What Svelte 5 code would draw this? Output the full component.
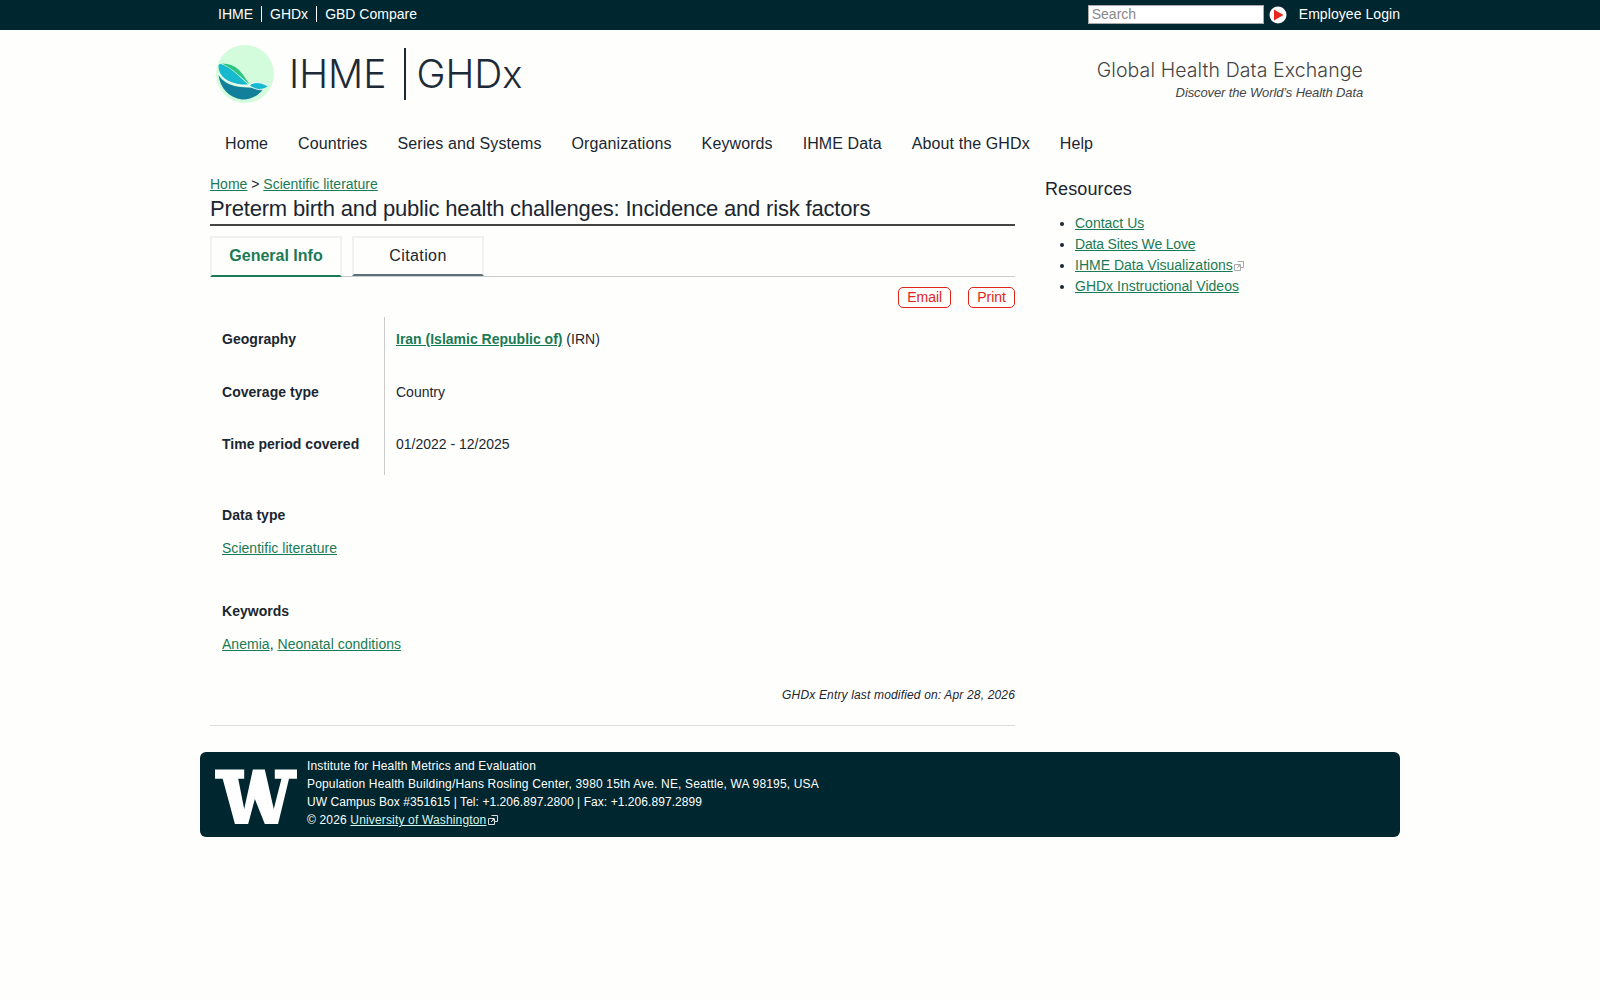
<script>
  const topLinks = ['IHME', 'GHDx', 'GBD Compare'];
  const nav = ['Home', 'Countries', 'Series and Systems', 'Organizations', 'Keywords', 'IHME Data', 'About the GHDx', 'Help'];
  const rows = [
    { k: 'Coverage type', v: 'Country' },
    { k: 'Time period covered', v: '01/2022 - 12/2025' }
  ];
</script>

{#snippet ext()}
  <svg class="ext" viewBox="0 0 10 10" width="10" height="10" aria-hidden="true">
    <path d="M3.5 .5h6v6h-2.5M.5 3.5h6v6h-6zM3 7l3-3M4 4h2v2" fill="none" stroke="currentColor" stroke-width="1" />
  </svg>
{/snippet}

<div class="topbar">
  <div class="wrap topin">
    <ul class="toplinks">
      {#each topLinks as t}<li>{t}</li>{/each}
    </ul>
    <div class="topright">
      <input class="search" placeholder="Search" />
      <svg class="go" viewBox="0 0 18 18" width="18" height="18" aria-hidden="true">
        <circle cx="9" cy="9" r="8.5" fill="#fff" />
        <path d="M5 3.5 L14.5 9 L5 14.5z" fill="#e8281c" />
      </svg>
      <span class="login">Employee Login</span>
    </div>
  </div>
</div>

<header class="wrap brand">
  <div class="logo">
    <svg viewBox="0 0 60 60" width="60" height="60" aria-hidden="true">
      <circle cx="30" cy="30" r="29" fill="#d3fcdc" />
      <path d="M3.500 31 C10 41 20 43 33 43.500 C42 44 48 45.500 48 45.500 C43 52 35 56 27 55.500 C14 54 5 44 3.500 31z" fill="#12809b" />
      <path d="M3.500 22 C4 20 5 20 6 20 C15 23 24 32 33 40.500 C24 41 14 39 8 33 C5 30 3.500 26 3.500 22z" fill="#17b9cf" />
      <path d="M7 19.500 C14 20 19 21 24 26 C28 30 31 35 34.500 40.500 C26 33 18 25 7 19.500z" fill="#2ec483" />
      <path d="M35 41 C39 38 43 38 47 39 L53 42 C49 45 46 45 40 45 C37 45 36 43 35 41z" fill="#17b9cf" />
      <path d="M3 29 C10 38 22 42 33 42 M33 41 C38 44 43 46.500 48 45.500 M33 42 C37 38 44 37 53 42" fill="none" stroke="#fff" stroke-width=".9" />
    </svg>
    <span class="mark first">IHME</span>
    <span class="rule"></span>
    <span class="mark">GHD<span class="x">x</span></span>
  </div>
  <div class="tagline">
    <div class="gh">Global Health Data Exchange</div>
    <div class="disc">Discover the World’s Health Data</div>
  </div>
</header>

<nav class="wrap mainnav">
  {#each nav as n}<span>{n}</span>{/each}
</nav>

<div class="wrap columns">
  <main>
    <div class="crumbs"><a href="#a">Home</a> &gt; <a href="#a">Scientific literature</a></div>
    <h1>Preterm birth and public health challenges: Incidence and risk factors</h1>
    <div class="tabs">
      <div class="tab active">General Info</div>
      <div class="tab cit">Citation</div>
    </div>
    <div class="actions">
      <span class="btn">Email</span>
      <span class="btn">Print</span>
    </div>
    <div class="facts">
      <div class="fact">
        <div class="k">Geography</div>
        <div class="v"><a href="#a" class="strong">Iran (Islamic Republic of)</a> (IRN)</div>
      </div>
      {#each rows as r}
        <div class="fact">
          <div class="k">{r.k}</div>
          <div class="v">{r.v}</div>
        </div>
      {/each}
    </div>
    <section class="block first">
      <div class="k">Data type</div>
      <p><a href="#a">Scientific literature</a></p>
    </section>
    <section class="block">
      <div class="k">Keywords</div>
      <p><a href="#a">Anemia</a>, <a href="#a">Neonatal conditions</a></p>
    </section>
    <div class="modified">GHDx Entry last modified on: Apr 28, 2026</div>
  </main>
  <aside>
    <h2>Resources</h2>
    <ul>
      <li><a href="#a">Contact Us</a></li>
      <li><a href="#a" class="tight">Data Sites We Love</a></li>
      <li><a href="#a">IHME Data Visualizations</a><span class="grey">{@render ext()}</span></li>
      <li><a href="#a">GHDx Instructional Videos</a></li>
    </ul>
  </aside>
</div>

<footer class="wrap foot">
  <svg class="w" viewBox="0 0 82.300 55" width="82" height="55" aria-hidden="true">
    <path d="M0 .3H29.300V9.700H23.300L29.300 40L38 .3H50L59 40L66.700 9.700H60V.3H82.300V9.700H74.300L63.300 55H50L40 30L33.300 55H20L7.700 9.700H0z" fill="#fff" />
  </svg>
  <div class="addr">
    <div>Institute for Health Metrics and Evaluation</div>
    <div>Population Health Building/Hans Rosling Center, 3980 15th Ave. NE, Seattle, WA 98195, USA</div>
    <div class="nums">UW Campus Box #351615 | Tel: +1.206.897.2800 | Fax: +1.206.897.2899</div>
    <div>© 2026 <a href="#a">University of Washington</a>{@render ext()}</div>
  </div>
</footer>

<style>
  :global(body) {
    margin: 0;
    background: #fefefd;
    color: #1a2630;
    font-family: "Liberation Sans", Arial, sans-serif;
    font-size: 14px;
  }
  .wrap { width: 1200px; margin: 0 auto; box-sizing: border-box; }
  a { color: #1a7a55; }

  .topbar { background: #00272f; height: 30px; color: #fff; }
  .topin { display: flex; justify-content: space-between; align-items: center; height: 29px; }
  .toplinks { display: flex; list-style: none; margin: 0 0 1px; padding: 0 0 0 18px; font-size: 14px; }
  .toplinks li { padding: 0 8px; border-left: 1px solid #fff; line-height: 16px; }
  .toplinks li:first-child { padding-left: 0; border-left: 0; }
  .topright { display: flex; align-items: center; }
  .search {
    width: 176px; height: 19px; box-sizing: border-box; border: 1px solid #aaa; background: #fff;
    padding: 0 3px 2px; font: 14px "Liberation Sans", sans-serif; border-radius: 0;
  }
  .search::placeholder { color: #888; }
  .go { margin-left: 5px; }
  .login { margin: 0 0 1px 12px; font-size: 14px; letter-spacing: .06px; line-height: 16px; }

  .brand { display: flex; justify-content: space-between; padding: 14px 37px 0 15px; height: 100px; }
  .logo { display: flex; align-items: flex-start; color: #1b2a36; }
  .logo svg { display: block; }
  .mark { font-family: Inter, sans-serif; font-weight: 300; font-size: 39px; line-height: 60px; }
  .mark.first { margin-left: 14px; }
  .x { font-size: 38px; }
  .rule { width: 2px; height: 52px; background: #1b2a36; margin: 4px 10px 0 18px; }
  .tagline { text-align: right; padding-top: 14px; }
  .gh { font-family: Inter, sans-serif; font-weight: 300; font-size: 19.500px; letter-spacing: .1px; line-height: 24px; color: #444; }
  .disc { font-style: italic; font-size: 13px; letter-spacing: -.12px; line-height: 20px; color: #444; margin-top: 1px; }

  .mainnav { display: flex; gap: 30px; padding-left: 25px; font-size: 16px; line-height: 20px; height: 20px; margin-top: 4px; color: #1a2630; letter-spacing: .1px; }

  .columns { display: flex; padding-left: 10px; margin-top: 20px; }
  main { width: 805px; }
  aside { margin-left: 30px; flex: 1; }
  .crumbs { line-height: 20px; padding-bottom: 1px; }
  h1 {
    font-weight: normal; font-size: 22px; line-height: 27px; margin: 0; letter-spacing: -.175px;
    border-bottom: 2px solid #444; padding-bottom: 2px;
  }
  .tabs { display: flex; align-items: flex-start; gap: 10px; margin-top: 10px; border-bottom: 1px solid #ccc; height: 40px; }
  .tab {
    width: 132px; height: 40px; box-sizing: border-box; border: 2px solid #f0f1f3; border-bottom: 2px solid #5f6f78;
    text-align: center; font-size: 16px; line-height: 35px;
  }
  .tab.cit { letter-spacing: .4px; }
  .tab.active { height: 41px; color: #1a7a55; font-weight: bold; border-bottom-color: #1a7a55; }
  .actions { display: flex; justify-content: flex-end; gap: 17px; margin-top: 10px; height: 21px; }
  .btn {
    border: 1px solid #e2231a; border-radius: 5px; color: #e2231a; padding: 0 8px; line-height: 19px; font-size: 14px;
  }
  .facts { margin-top: 9px; background: linear-gradient(#ccc, #ccc) 174px 0 / 1px 100% no-repeat; height: 158px; }
  .fact { display: flex; height: 52.500px; line-height: 20px; }
  .k { font-weight: bold; padding-left: 12px; letter-spacing: .03px; }
  .fact .k { width: 174px; box-sizing: border-box; padding-top: 12px; }
  .fact .v { padding: 12px 0 0 12px; }
  .strong { font-weight: bold; }
  .block { line-height: 20px; }
  .block p { margin: 13px 0 0 12px; letter-spacing: .03px; }
  .block.first { margin-top: 30px; }
  .block + .block { margin-top: 43px; }
  .modified { text-align: right; font-style: italic; font-size: 12px; letter-spacing: .16px; line-height: 20px; margin-top: 31px; padding-bottom: 20px; border-bottom: 1px solid #ddd; }

  h2 { font-weight: normal; font-size: 18px; line-height: 22px; margin: 0; padding-top: 4px; letter-spacing: .1px; }
  aside ul { margin: 13px 0 0; padding-left: 30px; line-height: 21px; }
  .tight { letter-spacing: -.17px; }
  .ext { margin-left: 1px; vertical-align: -1px; }
  .grey { color: #aaa; }

  .foot {
    background: #00272f; color: #fff; border-radius: 6px; height: 85px; margin-top: 26px;
    display: flex; padding: 17px 0 0 15px; font-size: 12px; letter-spacing: .16px;
  }
  .w { flex: none; }
  .addr { margin: -12px 0 0 10px; line-height: 18px; }
  .nums { letter-spacing: .06px; }
  .addr a { color: #d8f5ee; }
  .addr .ext { color: #ddd; margin-left: 2px; }
</style>
